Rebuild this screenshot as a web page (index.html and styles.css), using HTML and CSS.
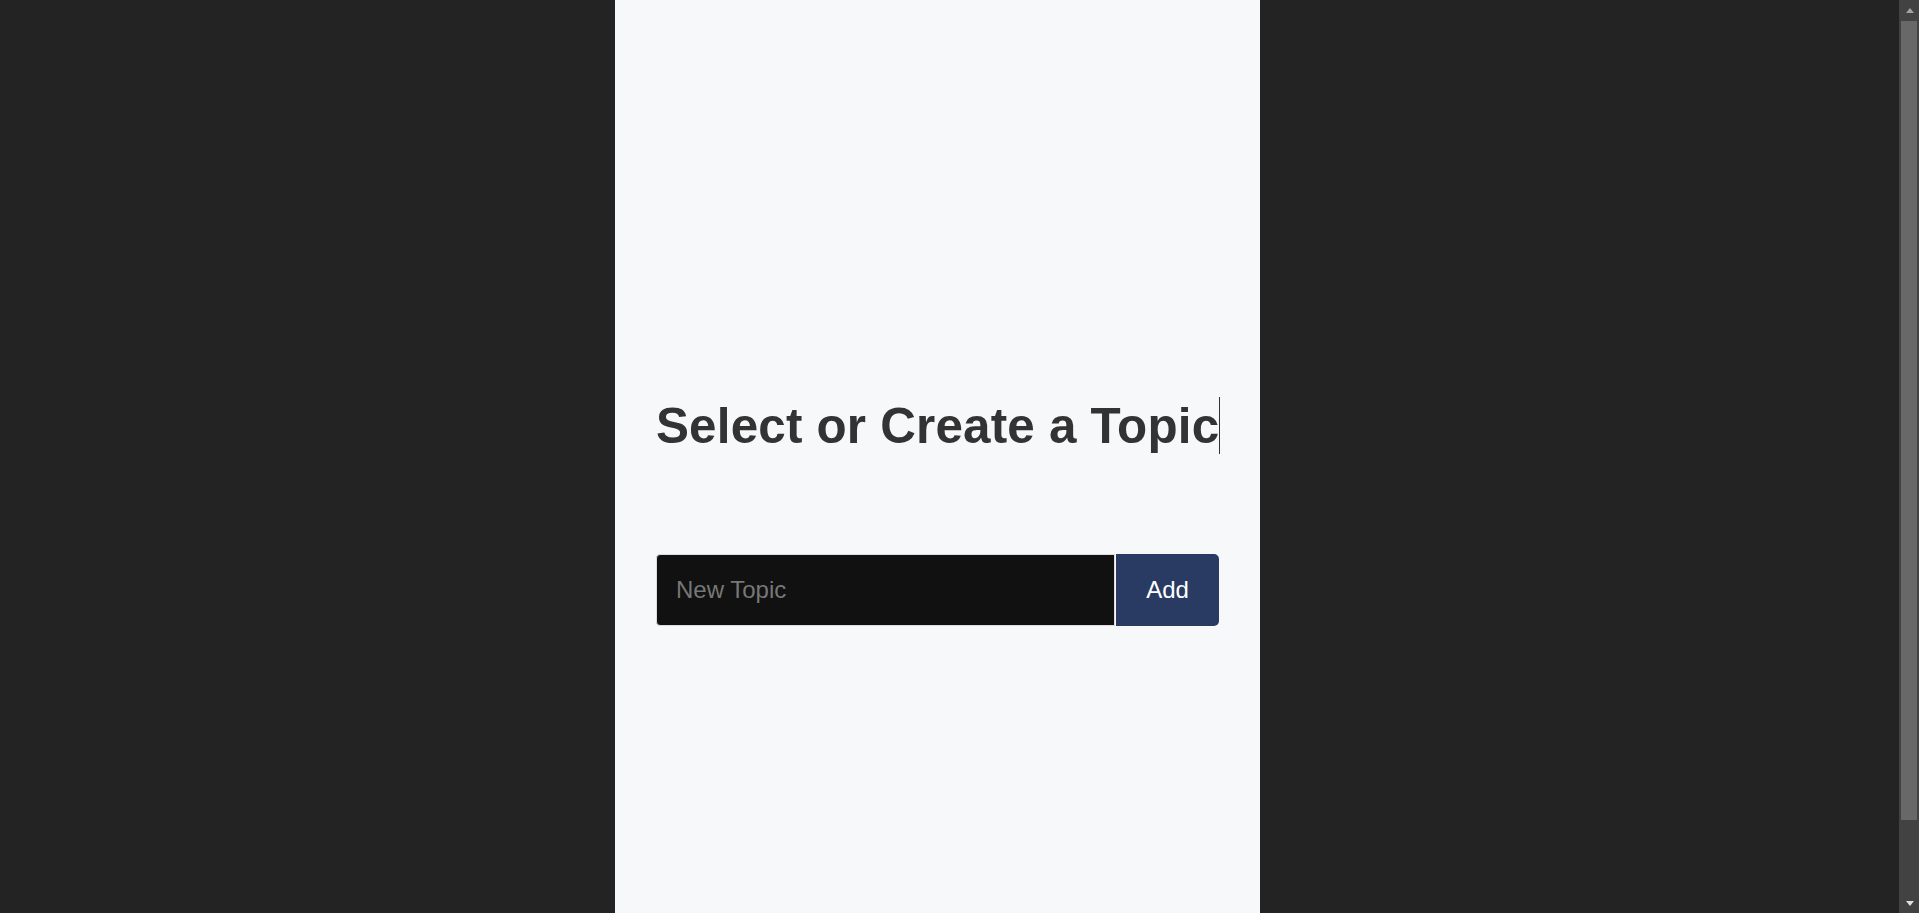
FILE: index.html
```html
<!DOCTYPE html>
<html lang="en">
<head>
<meta charset="utf-8">
<title>Topics</title>
<link rel="stylesheet" href="styles.css">
</head>
<body>
<div class="app">
  <aside class="side side-left"></aside>
  <main class="panel">
    <div class="content">
      <h1 class="typewriter">Select or Create a Topic</h1>
      <form class="input-group">
        <input class="topic-input" type="text" placeholder="New Topic">
        <button class="add-btn" type="button">Add</button>
      </form>
    </div>
  </main>
  <aside class="side side-right"></aside>
</div>
<div class="scrollbar" aria-hidden="true">
  <div class="sb-btn sb-up"><span class="arrow-up"></span></div>
  <div class="sb-track"><div class="sb-thumb"></div></div>
  <div class="sb-btn sb-down"><span class="arrow-down"></span></div>
</div>
</body>
</html>
```
FILE: styles.css
```css
html, body {
  margin: 0;
  padding: 0;
}

html::-webkit-scrollbar {
  display: none;
}

body {
  background: #232323;
  font-family: "Liberation Sans", Arial, Helvetica, sans-serif;
  color: #333;
}

.app {
  display: grid;
  grid-template-columns: 615px 645px 1fr;
  min-height: 100vh;
}

.panel {
  background: #f7f8fa;
  padding: 0 41px;
  min-height: 998px;
  box-sizing: border-box;
}

.content {
  padding-top: 397px;
  display: flex;
  flex-direction: column;
  align-items: flex-start;
}

.typewriter {
  margin: 0;
  font-size: 49.4px;
  font-weight: bold;
  letter-spacing: 0.18px;
  line-height: normal;
  color: #333;
  white-space: nowrap;
  border-right: 1px solid #333;
}

.input-group {
  margin-top: 100px;
  display: flex;
  gap: 1px;
  width: 563px;
  height: 72px;
}

.topic-input {
  flex: 1;
  min-width: 0;
  box-sizing: border-box;
  height: 72px;
  margin: 0;
  padding: 0 19px;
  background: #111;
  color: #eee;
  border: 1px solid #dcdcdc;
  border-radius: 4px 0 0 4px;
  font-family: "Liberation Sans", Arial, sans-serif;
  font-size: 24px;
  outline: none;
}

.topic-input::placeholder {
  color: #777;
}

.add-btn {
  width: 103px;
  height: 72px;
  margin: 0;
  padding: 0;
  background: #2a3b63;
  color: #fff;
  border: none;
  border-radius: 0 5px 5px 0;
  font-family: "Liberation Sans", Arial, sans-serif;
  font-size: 24px;
  cursor: pointer;
}

/* decorative scrollbar, drawn over the page edge */
.scrollbar {
  position: fixed;
  top: 0;
  right: 0;
  width: 20px;
  height: 100vh;
  background: #424242;
  display: flex;
  flex-direction: column;
}

.sb-btn {
  height: 20px;
  flex: none;
  display: flex;
  justify-content: center;
  align-items: center;
}

.arrow-up {
  width: 0;
  height: 0;
  border-left: 4.5px solid transparent;
  border-right: 4.5px solid transparent;
  border-bottom: 5px solid #a3a3a3;
  margin-left: 1px;
}

.arrow-down {
  width: 0;
  height: 0;
  border-left: 4.5px solid transparent;
  border-right: 4.5px solid transparent;
  border-top: 5px solid #e0e0e0;
  margin-left: 1px;
}

.sb-track {
  flex: 1;
  padding: 1px 2px 0 2px;
}

.sb-thumb {
  height: 799px;
  background: #686868;
}
```
